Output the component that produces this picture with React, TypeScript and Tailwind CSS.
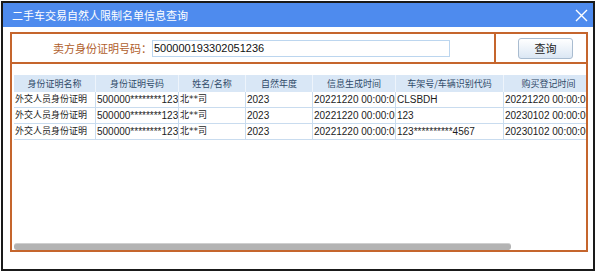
const cols = [
  { title: "身份证明名称", w: "w-[82px]" },
  { title: "身份证明号码", w: "w-[83px]" },
  { title: "姓名/名称", w: "w-[67px]" },
  { title: "自然年度", w: "w-[67px]" },
  { title: "信息生成时间", w: "w-[83px]" },
  { title: "车架号/车辆识别代码", w: "w-[108px]" },
  { title: "购买登记时间", w: "w-[90px]" },
];

const rows = [
  ["外交人员身份证明", "500000********123", "北**司", "2023", "20221220 00:00:00", "CLSBDH", "20221220 00:00:00"],
  ["外交人员身份证明", "500000********123", "北**司", "2023", "20221220 00:00:00", "123", "20230102 00:00:00"],
  ["外交人员身份证明", "500000********123", "北**司", "2023", "20221220 00:00:00", "123**********4567", "20230102 00:00:00"],
];

// latin-only values use a 10px Arial-width face, cjk values a 9px face
const isLatin = (s: string) => /^[\x00-\x7f]*$/.test(s);

export default function App() {
  return (
    <div className="w-[600px] h-[274px] bg-white pt-[1px] pl-[1px]">
      <div className="w-[594px] h-[270px] border-2 border-[#1a1a1a] flex flex-col bg-white">
        {/* title bar */}
        <div className="h-[24px] bg-[#4e8bee] flex items-center justify-between pl-[9px] pr-[5px]">
          <span className="text-white text-[11px] font-['Noto_Sans_CJK_SC',sans-serif]">
            二手车交易自然人限制名单信息查询
          </span>
          <svg width="13" height="13" viewBox="0 0 13 13">
            <path d="M1 1 L12 12 M12 1 L1 12" stroke="#ffffff" strokeWidth="1.4" fill="none" />
          </svg>
        </div>

        {/* frame */}
        <div className="ml-[7px] mr-[5px] mt-[5px] h-[220px] border-2 border-[#c5652d] flex flex-col">
          {/* search row */}
          <div className="h-[30px] flex border-b-2 border-[#c5652d]">
            <div className="w-[482px] flex items-center pl-[41px]">
              <span className="text-[11px] text-[#b0602c] font-['Noto_Sans_CJK_SC',sans-serif] w-[99px]">
                卖方身份证明号码：
              </span>
              <div className="w-[298px] h-[17px] border border-[#bcd6ef] flex items-center pl-[1px]">
                <span className="text-[11px] text-[#111] font-['Liberation_Sans',sans-serif]">
                  500000193302051236
                </span>
              </div>
            </div>
            <div className="flex-1 border-l-2 border-[#c5652d] flex items-center pl-[22px]">
              <button className="w-[55px] h-[21px] rounded-[3px] border border-[#a9bcd0] bg-gradient-to-b from-[#ffffff] to-[#dbe7f4] text-[11px] text-[#1d1d1d] font-['Noto_Sans_CJK_SC',sans-serif] flex items-center justify-center">
                查询
              </button>
            </div>
          </div>

          {/* grid */}
          <div className="flex-1 flex flex-col pl-[2px] pt-[11px] overflow-hidden">
            <div className="flex-1 overflow-hidden">
              <div className="flex h-[17px] bg-[#d9e7f6] w-max text-[9px] font-['Noto_Sans_CJK_SC',sans-serif]">
                {cols.map((c, i) => (
                  <div
                    key={i}
                    className={`${c.w} shrink-0 border-r border-[#eef4fb] flex items-center justify-center text-[#2f4a68] whitespace-nowrap overflow-hidden`}
                  >
                    {c.title}
                  </div>
                ))}
              </div>
              {rows.map((r, ri) => (
                <div key={ri} className="flex h-[16px] w-max border-b border-[#c9dcef]">
                  {r.map((v, ci) => (
                    <div
                      key={ci}
                      className={`${cols[ci].w} shrink-0 border-r border-[#c9dcef] flex items-center pl-[1px] text-[#1c1c1c] whitespace-nowrap overflow-hidden ${
                        isLatin(v)
                          ? "text-[10px] font-['Liberation_Sans',sans-serif]"
                          : "text-[9px] font-['DejaVu_Sans','Noto_Sans_CJK_SC',sans-serif]"
                      }`}
                    >
                      {v}
                    </div>
                  ))}
                </div>
              ))}
            </div>
            {/* horizontal scrollbar */}
            <div className="h-[7px] w-[497px] rounded-[3px] bg-[#b3b3b3] border-t border-[#cfcfcf]" />
          </div>
        </div>
      </div>
    </div>
  );
}
